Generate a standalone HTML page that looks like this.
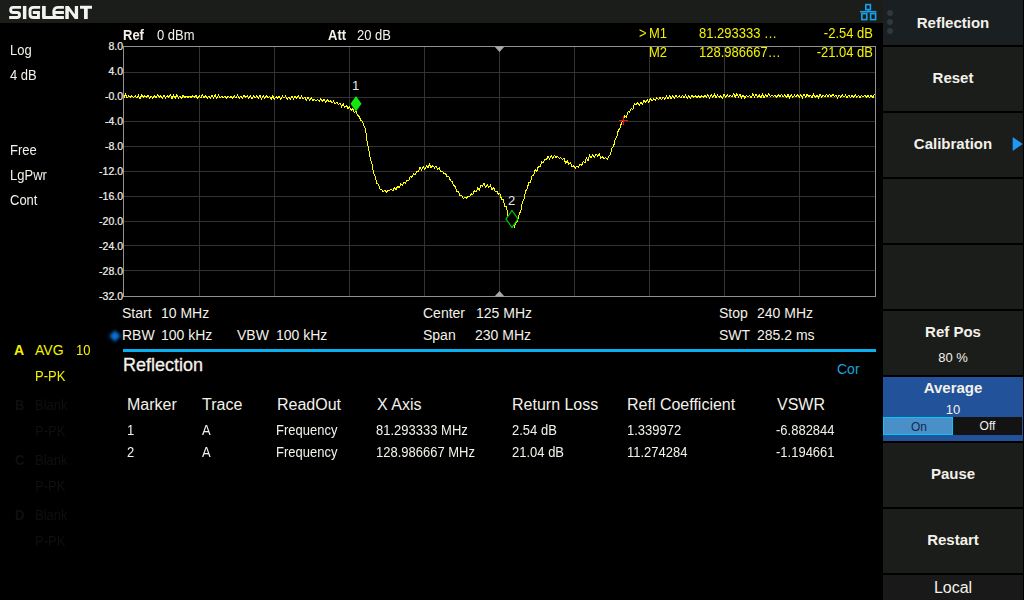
<!DOCTYPE html>
<html><head><meta charset="utf-8">
<style>
*{margin:0;padding:0;box-sizing:border-box}
html,body{width:1024px;height:600px;overflow:hidden;background:#000}
body{position:relative;font-family:"Liberation Sans",sans-serif;color:#f4f1ea;font-size:13px}
.a{position:absolute;white-space:nowrap;line-height:1}
.b{font-weight:bold}
.t{transform:scaleY(1.1);transform-origin:0 85%}
.y{color:#f2f200}
.dim{color:#0f0f0f}
.yl{right:901px;font-size:10.5px;color:#f4f1ea;-webkit-text-stroke:0.2px #f4f1ea}
.btn{position:absolute;left:883px;width:140px;background:#1b1d1a;color:#f4f1ea;font-weight:bold;font-size:15px;text-align:center}
.bt{position:absolute;left:0;width:140px;text-align:center;line-height:1}
.th{font-size:16px}
</style></head><body>
<div class="a" style="left:0;top:0;width:883px;height:23px;background:#1b1d1a"></div>
<svg class="a" style="left:0;top:0" width="100" height="23"><g fill="none" stroke="#f2f2ee" stroke-width="2.9">
<path d="M21.1 7.4H13.2A2.55 2.55 0 0 0 13.2 12.5H17A2.525 2.525 0 0 1 17 17.55H9.15"/>
<path d="M24.65 5.95V19.05" stroke-width="3.5"/>
<path d="M40.2 7.4H33.5Q30 7.4 30 10.5V14.45Q30 17.55 33.5 17.55H38.45V12.5H32.8"/>
<path d="M43.85 5.95V17.55H57.5Q53.75 17.55 53.75 12.5Q53.75 7.4 57.5 7.4H63.9M54.7 12.5H63.9M63.9 17.55H57" />
<path d="M43.85 5.95V17.55" stroke-width="3.5"/>
<path d="M80 7.3H92M85.85 7.3V19.05" />
<path d="M85.85 8V19.05" stroke-width="3.6"/>
</g>
<polygon points="65.3,19.05 65.3,5.95 68.8,5.95 74.8,14.2 74.8,5.95 78.1,5.95 78.1,19.05 74.8,19.05 68.8,10.8 68.8,19.05" fill="#f2f2ee"/>
</svg>
<svg class="a" style="left:855px;top:0" width="26" height="23" viewBox="0 0 26 23">
<g fill="none" stroke="#1aa0e8" stroke-width="1.6">
<rect x="10.8" y="4.6" width="4.6" height="5"/>
<rect x="6.8" y="13.6" width="5" height="6"/>
<rect x="15.6" y="13.6" width="5" height="6"/>
<line x1="13.3" y1="9.5" x2="13.3" y2="11.7"/>
<line x1="5" y1="11.7" x2="21.4" y2="11.7"/>
</g></svg>

<div class="a t" style="left:10px;top:44px">Log</div>
<div class="a t" style="left:10px;top:69px">4 dB</div>
<div class="a t" style="left:10px;top:144px">Free</div>
<div class="a t" style="left:10px;top:169px">LgPwr</div>
<div class="a t" style="left:10px;top:194px">Cont</div>

<div class="a t b" style="left:123px;top:29px">Ref</div>
<div class="a t" style="left:157px;top:29px">0 dBm</div>
<div class="a t b" style="left:328px;top:29px">Att</div>
<div class="a t" style="left:357px;top:29px">20 dB</div>

<svg class="a" style="left:0;top:0" width="1024" height="600">
<g stroke="#333331" stroke-width="1" shape-rendering="crispEdges"><line x1="124" y1="72.5" x2="875" y2="72.5"/><line x1="124" y1="97.5" x2="875" y2="97.5"/><line x1="124" y1="121.5" x2="875" y2="121.5"/><line x1="124" y1="146.5" x2="875" y2="146.5"/><line x1="124" y1="171.5" x2="875" y2="171.5"/><line x1="124" y1="196.5" x2="875" y2="196.5"/><line x1="124" y1="221.5" x2="875" y2="221.5"/><line x1="124" y1="245.5" x2="875" y2="245.5"/><line x1="124" y1="270.5" x2="875" y2="270.5"/><line x1="199.5" y1="47" x2="199.5" y2="296"/><line x1="274.5" y1="47" x2="274.5" y2="296"/><line x1="349.5" y1="47" x2="349.5" y2="296"/><line x1="424.5" y1="47" x2="424.5" y2="296"/><line x1="499.5" y1="47" x2="499.5" y2="296"/><line x1="574.5" y1="47" x2="574.5" y2="296"/><line x1="649.5" y1="47" x2="649.5" y2="296"/><line x1="724.5" y1="47" x2="724.5" y2="296"/><line x1="799.5" y1="47" x2="799.5" y2="296"/></g>
<rect x="123.5" y="46.5" width="752" height="250" fill="none" stroke="#919290" stroke-width="1" shape-rendering="crispEdges"/>
<polygon points="494.5,46.5 504.5,46.5 499.5,52" fill="#a8a8a8"/>
<polygon points="494.5,296.5 504.5,296.5 499.5,291" fill="#a8a8a8"/>
<polyline points="124.0,97.5 125.6,94.4 127.2,97.8 128.8,95.9 130.4,97.1 132.0,95.7 133.6,97.7 135.2,95.9 136.8,98.0 138.4,95.2 140.0,99.3 141.6,94.8 143.2,97.3 144.8,95.6 146.4,97.4 148.0,95.1 149.6,98.5 151.2,96.0 152.8,98.1 154.4,95.6 156.0,97.8 157.6,94.9 159.2,97.5 160.8,95.4 162.4,98.2 164.0,94.7 165.6,97.8 167.2,95.9 168.8,97.2 170.4,95.0 172.0,98.5 173.6,95.2 175.2,98.1 176.8,94.9 178.4,97.9 180.0,96.1 181.6,98.2 183.2,95.0 184.8,97.8 186.4,96.2 188.0,97.5 189.6,96.2 191.2,97.5 192.8,95.7 194.4,97.4 196.0,95.5 197.6,98.5 199.2,95.9 200.8,97.8 202.4,94.9 204.0,97.6 205.6,96.0 207.2,98.2 208.8,96.3 210.4,97.9 212.0,94.9 213.6,98.1 215.2,94.7 216.8,98.7 218.4,95.1 220.0,98.0 221.6,96.2 223.2,97.7 224.8,96.1 226.4,98.3 228.0,96.4 229.6,97.6 231.2,96.4 232.8,98.4 234.4,96.1 236.0,98.0 237.6,95.2 239.2,98.2 240.8,96.3 242.4,98.0 244.0,95.2 245.6,97.5 247.2,95.7 248.8,98.8 250.4,95.7 252.0,98.8 253.6,96.2 255.2,97.9 256.8,95.8 258.4,98.2 260.0,95.5 261.6,99.0 263.2,95.5 264.8,98.1 266.4,95.9 268.0,97.9 269.6,96.5 271.2,99.4 272.8,95.6 274.4,99.4 276.0,96.7 277.6,98.3 279.2,96.1 280.8,99.4 282.4,96.1 284.0,98.3 285.6,95.8 287.2,99.3 288.8,97.0 290.4,98.8 292.0,95.8 293.6,98.9 295.2,96.2 296.8,98.6 298.4,96.0 300.0,98.6 301.6,96.0 303.2,99.0 304.8,97.0 306.4,100.3 308.0,97.5 309.6,100.3 311.2,97.8 312.8,100.8 314.4,99.2 316.0,101.0 317.6,99.5 319.2,101.3 320.8,98.9 322.4,101.5 324.0,99.2 325.6,102.3 327.2,99.6 328.8,101.6 330.4,100.6 332.0,103.3 333.6,101.0 335.2,103.7 336.8,102.2 338.4,104.6 340.0,102.8 341.6,106.5 343.2,103.8 344.8,107.6 346.4,105.4 348.0,108.4 349.6,106.7 351.2,110.6 352.8,108.2 354.4,112.7 356.0,111.2 357.6,115.3 359.2,116.5 360.8,120.5 362.4,121.0 364.0,126.1 365.6,129.4 367.2,143.0 368.8,149.4 370.4,159.8 372.0,163.5 373.6,173.0 375.2,176.3 376.8,183.2 378.4,184.2 380.0,189.3 381.6,189.1 383.2,191.7 384.8,190.1 386.4,192.6 388.0,189.8 389.6,190.7 391.2,189.0 392.8,190.9 394.4,187.8 396.0,189.5 397.6,186.3 399.2,187.4 400.8,184.0 402.4,185.2 404.0,182.1 405.6,183.0 407.2,180.2 408.8,180.4 410.4,176.4 412.0,177.3 413.6,173.8 415.2,174.5 416.8,171.6 418.4,171.6 420.0,167.4 421.6,169.9 423.2,166.9 424.8,169.3 426.4,165.8 428.0,167.6 429.6,164.3 431.2,168.0 432.8,165.3 434.4,168.0 436.0,166.1 437.6,169.6 439.2,168.0 440.8,171.7 442.4,171.3 444.0,173.8 445.6,173.7 447.2,176.8 448.8,176.0 450.4,180.6 452.0,181.3 453.6,185.5 455.2,186.4 456.8,191.8 458.4,191.6 460.0,196.0 461.6,195.6 463.2,198.3 464.8,197.4 466.4,198.1 468.0,196.2 469.6,196.8 471.2,193.8 472.8,194.8 474.4,190.4 476.0,192.2 477.6,188.2 479.2,190.1 480.8,185.3 482.4,186.2 484.0,183.3 485.6,187.0 487.2,184.9 488.8,187.4 490.4,185.4 492.0,189.5 493.6,187.6 495.2,191.4 496.8,191.1 498.4,194.1 500.0,193.7 501.6,199.7 503.2,199.8 504.8,206.3 506.4,206.5 508.0,215.8 509.6,216.0 511.2,221.3 512.8,222.0 514.4,227.0 516.0,222.5 517.6,221.3 519.2,214.0 520.8,211.3 522.4,202.2 524.0,199.5 525.6,191.0 527.2,188.5 528.8,182.6 530.4,182.1 532.0,175.8 533.6,175.4 535.2,169.8 536.8,171.1 538.4,166.4 540.0,166.7 541.6,161.9 543.2,162.3 544.8,159.5 546.4,159.9 548.0,156.1 549.6,159.2 551.2,155.5 552.8,158.1 554.4,155.4 556.0,157.5 557.6,156.2 559.2,158.6 560.8,157.4 562.4,159.7 564.0,158.5 565.6,163.2 567.2,160.5 568.8,164.5 570.4,162.6 572.0,166.8 573.6,165.7 575.2,168.5 576.8,166.1 578.4,167.1 580.0,164.1 581.6,165.5 583.2,161.5 584.8,163.1 586.4,158.2 588.0,160.7 589.6,155.3 591.2,157.9 592.8,154.6 594.4,157.5 596.0,154.1 597.6,156.0 599.2,154.0 600.8,158.3 602.4,156.4 604.0,159.2 605.6,157.5 607.2,159.4 608.8,156.0 610.4,154.8 612.0,148.2 613.6,146.3 615.2,139.4 616.8,137.1 618.4,129.8 620.0,128.5 621.6,122.2 623.2,120.6 624.8,115.9 626.4,117.0 628.0,111.7 629.6,112.4 631.2,108.5 632.8,109.6 634.4,103.2 636.0,105.2 637.6,102.4 639.2,105.7 640.8,102.1 642.4,104.4 644.0,100.1 645.6,102.2 647.2,99.7 648.8,102.3 650.4,98.6 652.0,101.1 653.6,99.1 655.2,100.3 656.8,97.7 658.4,99.6 660.0,97.3 661.6,99.5 663.2,97.1 664.8,99.3 666.4,96.0 668.0,98.8 669.6,95.5 671.2,98.9 672.8,95.9 674.4,98.4 676.0,95.2 677.6,97.7 679.2,95.4 680.8,98.0 682.4,95.3 684.0,97.5 685.6,95.0 687.2,98.2 688.8,95.2 690.4,98.5 692.0,94.8 693.6,97.3 695.2,95.6 696.8,97.7 698.4,95.7 700.0,98.0 701.6,95.8 703.2,97.3 704.8,95.5 706.4,97.0 708.0,94.6 709.6,98.0 711.2,94.5 712.8,97.2 714.4,94.1 716.0,97.9 717.6,95.3 719.2,97.4 720.8,95.4 722.4,98.2 724.0,94.4 725.6,97.3 727.2,94.5 728.8,96.8 730.4,95.2 732.0,97.0 733.6,93.6 735.2,97.3 736.8,93.9 738.4,97.0 740.0,94.3 741.6,97.8 743.2,95.1 744.8,98.1 746.4,95.2 748.0,97.1 749.6,95.6 751.2,97.9 752.8,93.4 754.4,96.9 756.0,94.1 757.6,97.1 759.2,94.9 760.8,97.9 762.4,94.3 764.0,97.7 765.6,94.6 767.2,97.0 768.8,93.7 770.4,96.8 772.0,94.8 773.6,96.6 775.2,95.0 776.8,97.8 778.4,94.7 780.0,96.6 781.6,94.4 783.2,96.9 784.8,94.6 786.4,97.6 788.0,94.5 789.6,97.8 791.2,94.6 792.8,97.6 794.4,95.1 796.0,96.7 797.6,94.6 799.2,97.1 800.8,94.7 802.4,97.7 804.0,94.0 805.6,97.2 807.2,94.2 808.8,96.6 810.4,95.3 812.0,98.0 813.6,94.1 815.2,97.8 816.8,95.1 818.4,97.9 820.0,94.6 821.6,96.8 823.2,95.3 824.8,96.9 826.4,94.5 828.0,96.5 829.6,94.5 831.2,97.0 832.8,94.3 834.4,96.6 836.0,94.9 837.6,98.0 839.2,95.3 840.8,97.1 842.4,95.0 844.0,97.0 845.6,95.0 847.2,97.8 848.8,95.0 850.4,97.6 852.0,95.5 853.6,97.1 855.2,94.9 856.8,97.2 858.4,95.5 860.0,97.5 861.6,95.4 863.2,97.1 864.8,95.3 866.4,97.3 868.0,95.3 869.6,97.7 871.2,95.2 872.8,97.9 874.4,94.3" fill="none" stroke="#ffff00" stroke-width="1" stroke-linejoin="miter" shape-rendering="crispEdges"/>
<path d="M619 120.5H628M623.5 116V125" stroke="#ff1010" stroke-width="1" shape-rendering="crispEdges"/>
<polygon points="356,96 361.5,103.8 356,111.5 350.5,103.8" fill="#10e810"/>
<polygon points="512,210.5 518,219 512,227.5 506,219" fill="#000" stroke="#00e000" stroke-width="1.1"/>

<rect x="123" y="349" width="753" height="3" fill="#08b0f0"/>
</svg>
<div class="a yl" style="top:41px">8.0</div><div class="a yl" style="top:66px">4.0</div><div class="a yl" style="top:91px">-0.0</div><div class="a yl" style="top:116px">-4.0</div><div class="a yl" style="top:141px">-8.0</div><div class="a yl" style="top:166px">-12.0</div><div class="a yl" style="top:191px">-16.0</div><div class="a yl" style="top:216px">-20.0</div><div class="a yl" style="top:241px">-24.0</div><div class="a yl" style="top:266px">-28.0</div><div class="a yl" style="top:291px">-32.0</div>
<div class="a" style="left:110.6px;top:331.6px;width:7.8px;height:7.8px;background:#0870d8;transform:rotate(45deg);filter:blur(1.6px)"></div>
<div class="a" style="left:352px;top:79px;color:#e8e8e8;font-size:13px">1</div>
<div class="a" style="left:508px;top:194px;color:#e8e8e8;font-size:13px">2</div>

<div class="a t y" style="left:639px;top:27px">&gt;</div>
<div class="a t y" style="left:649px;top:27px">M1</div>
<div class="a t y" style="left:699px;top:27px">81.293333 …</div>
<div class="a t y" style="right:151px;top:27px">-2.54 dB</div>
<div class="a t y" style="left:649px;top:46px">M2</div>
<div class="a t y" style="left:699px;top:46px">128.986667…</div>
<div class="a t y" style="right:151px;top:46px">-21.04 dB</div>

<div class="a" style="left:122px;top:306px;font-size:14px">Start</div>
<div class="a" style="left:161px;top:306px;font-size:14px">10 MHz</div>
<div class="a" style="left:122px;top:328px;font-size:14px">RBW</div>
<div class="a" style="left:161px;top:328px;font-size:14px">100 kHz</div>
<div class="a" style="left:237px;top:328px;font-size:14px">VBW</div>
<div class="a" style="left:276px;top:328px;font-size:14px">100 kHz</div>
<div class="a" style="left:423px;top:306px;font-size:14px">Center</div>
<div class="a" style="left:476px;top:306px;font-size:14px">125 MHz</div>
<div class="a" style="left:423px;top:328px;font-size:14px">Span</div>
<div class="a" style="left:475px;top:328px;font-size:14px">230 MHz</div>
<div class="a" style="left:719px;top:306px;font-size:14px">Stop</div>
<div class="a" style="left:757px;top:306px;font-size:14px">240 MHz</div>
<div class="a" style="left:719px;top:328px;font-size:14px">SWT</div>
<div class="a" style="left:757px;top:328px;font-size:14px">285.2 ms</div>

<div class="a" style="left:123px;top:356px;font-size:18px;-webkit-text-stroke:0.3px #f4f1ea">Reflection</div>
<div class="a" style="left:837px;top:362px;font-size:14px;color:#1ea0d8">Cor</div>
<div class="a th" style="left:127px;top:397px">Marker</div>
<div class="a th" style="left:202px;top:397px">Trace</div>
<div class="a th" style="left:277px;top:397px">ReadOut</div>
<div class="a th" style="left:377px;top:397px">X Axis</div>
<div class="a th" style="left:512px;top:397px">Return Loss</div>
<div class="a th" style="left:627px;top:397px">Refl Coefficient</div>
<div class="a th" style="left:777px;top:397px">VSWR</div>
<div class="a t" style="left:127px;top:424px">1</div>
<div class="a t" style="left:202px;top:424px">A</div>
<div class="a t" style="left:276px;top:424px">Frequency</div>
<div class="a t" style="left:376px;top:424px">81.293333 MHz</div>
<div class="a t" style="left:512px;top:424px">2.54 dB</div>
<div class="a t" style="left:627px;top:424px">1.339972</div>
<div class="a t" style="left:776px;top:424px">-6.882844</div>
<div class="a t" style="left:127px;top:446px">2</div>
<div class="a t" style="left:202px;top:446px">A</div>
<div class="a t" style="left:276px;top:446px">Frequency</div>
<div class="a t" style="left:376px;top:446px">128.986667 MHz</div>
<div class="a t" style="left:512px;top:446px">21.04 dB</div>
<div class="a t" style="left:627px;top:446px">11.274284</div>
<div class="a t" style="left:776px;top:446px">-1.194661</div>

<div class="a b y" style="left:14px;top:343px;font-size:14px">A</div>
<div class="a y" style="left:35px;top:343px;font-size:14px">AVG</div>
<div class="a t y" style="left:76px;top:344px">10</div>
<div class="a t y" style="left:35px;top:370px">P-PK</div>
<div class="a t b dim" style="left:15px;top:399px">B</div>
<div class="a t dim" style="left:35px;top:399px">Blank</div>
<div class="a t dim" style="left:35px;top:425px">P-PK</div>
<div class="a t b dim" style="left:15px;top:454px">C</div>
<div class="a t dim" style="left:35px;top:454px">Blank</div>
<div class="a t dim" style="left:35px;top:480px">P-PK</div>
<div class="a t b dim" style="left:15px;top:509px">D</div>
<div class="a t dim" style="left:35px;top:509px">Blank</div>
<div class="a t dim" style="left:35px;top:535px">P-PK</div>

<div class="btn" style="top:0;height:45px;background:#1a1f21"><div class="bt" style="top:15px">Reflection</div>
<svg class="a" style="left:0;top:0" width="14" height="45"><g fill="#2f383b"><circle cx="7" cy="13" r="3"/><circle cx="7" cy="22" r="3"/><circle cx="7" cy="31" r="3"/></g></svg></div>
<div class="btn" style="top:47px;height:64px"><div class="bt" style="top:23px">Reset</div></div>
<div class="btn" style="top:113px;height:64px"><div class="bt" style="top:23px">Calibration</div>
<svg class="a" style="left:129px;top:24px" width="11" height="14"><polygon points="0.7,0 10.7,7 0.7,14" fill="#2196f3"/></svg></div>
<div class="btn" style="top:179px;height:64px"></div>
<div class="btn" style="top:245px;height:64px"></div>
<div class="btn" style="top:311px;height:64px"><div class="bt" style="top:13px">Ref Pos</div><div class="bt" style="top:40px;font-weight:normal;font-size:13px">80 %</div></div>
<div class="btn" style="top:377px;height:64px;background:#22529a"><div class="bt" style="top:3px">Average</div><div class="bt" style="top:26px;font-weight:normal;font-size:13px">10</div>
<div class="a" style="left:0;top:40px;width:70px;height:18px;background:#4a90c8;border:1px solid #00c8f8;color:#18284a;font-weight:normal;font-size:12px;text-align:center;line-height:18px;padding-left:2px">On</div>
<div class="a" style="left:70px;top:40px;width:69px;height:18px;background:#131313;font-weight:normal;font-size:12px;text-align:center;line-height:18px">Off</div></div>
<div class="btn" style="top:443px;height:64px"><div class="bt" style="top:23px">Pause</div></div>
<div class="btn" style="top:509px;height:64px"><div class="bt" style="top:23px">Restart</div></div>
<div class="btn" style="top:575px;height:25px;background:#181918;font-weight:normal;font-size:16px"><div class="bt" style="top:5px">Local</div></div>
</body></html>
